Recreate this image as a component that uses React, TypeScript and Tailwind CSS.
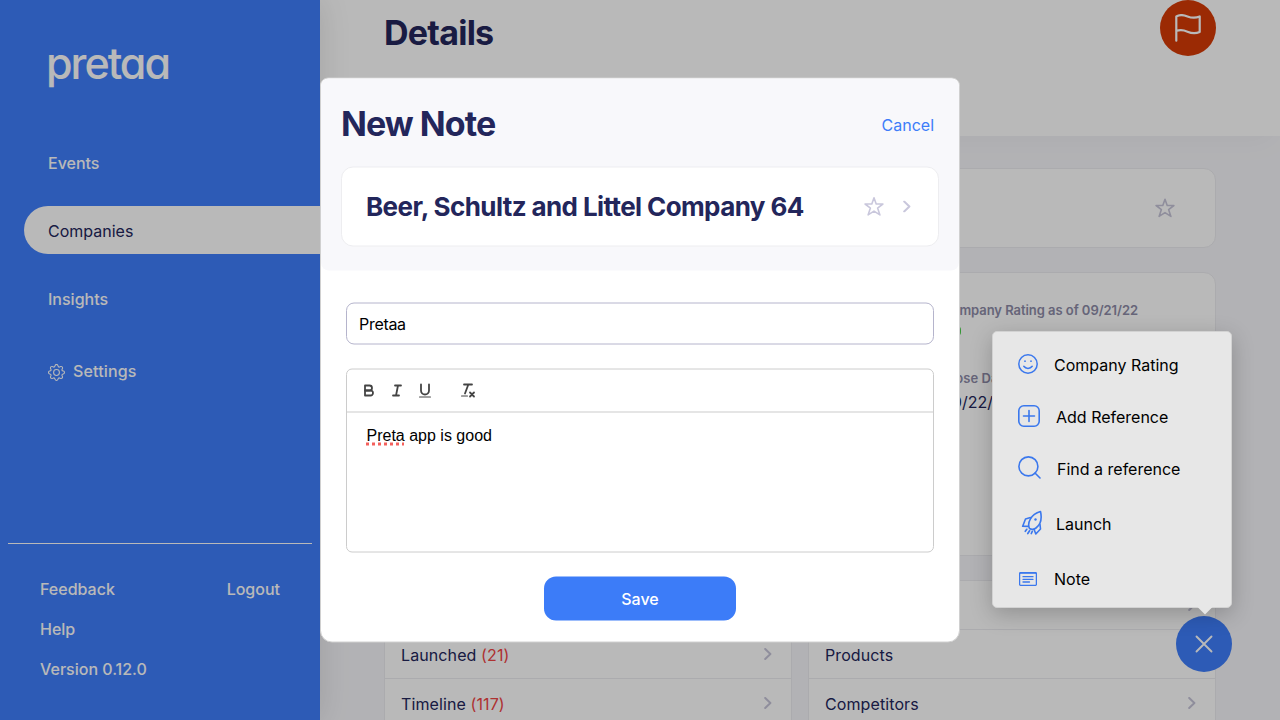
import type { ReactNode } from "react";
import { BsGear } from "react-icons/bs";

function Star({ className }: { className: string }) {
  return (
    <svg viewBox="0 0 20 20" className={className} fill="none" stroke="currentColor" strokeWidth="1.6" strokeLinejoin="round">
      <path d="M10 1.2 12.2 7.4 18.9 7.5 13.6 11.6 15.9 18.4 10 14.6 4.1 18.4 6.4 11.6 1.1 7.5 7.8 7.4Z" />
    </svg>
  );
}

function Chevron({ className }: { className: string }) {
  return (
    <svg viewBox="0 0 8 12" className={className} fill="none" stroke="currentColor" strokeWidth="2" strokeLinecap="round" strokeLinejoin="round">
      <path d="M1.2 1 6.4 6 1.2 11" />
    </svg>
  );
}

function ListRow({ label, count }: { label: string; count?: string }) {
  return (
    <div className="flex h-[49px] shrink-0 items-center justify-between border-b border-[#ececf0] px-4 pt-0.5">
      <span className="text-base tracking-[0.1px] text-[#23265b]">
        {label} {count && <span className="text-[#f04444]">{count}</span>}
      </span>
      <Chevron className="-mt-0.5 mr-[3px] h-3 w-2 text-[#c6c4d8]" />
    </div>
  );
}

function Sidebar() {
  return (
    <aside className="relative flex w-80 shrink-0 flex-col bg-[#3e7efb] text-base font-[450] text-white shadow-[0_0_30px_rgba(0,0,0,0.12)]">
      <div className="h-[139px] pt-[38px] pl-[46px] text-[43px] leading-[50px] font-medium tracking-[-2px] [font-feature-settings:'cv11']">pretaa</div>
      <nav className="flex flex-col">
        <a className="flex h-12 items-center pl-12">Events</a>
        <a className="mt-[19px] ml-6 flex h-12 items-center rounded-l-full bg-white pt-0.5 pl-6 font-normal text-[#23265b]">Companies</a>
        <a className="mt-5 flex h-12 items-center pt-0.5 pl-12">Insights</a>
        <a className="mt-6 flex h-12 items-center gap-2 pt-0.5 pl-12 tracking-[0.15px]">
          <BsGear className="mt-0.5 size-[17px]" />
          Settings
        </a>
      </nav>
      <div className="mx-2 mt-auto grid h-[177px] grid-cols-2 content-start gap-y-4 border-t border-white px-8 pt-[33px] leading-6">
        <span>Feedback</span>
        <span className="text-right">Logout</span>
        <span className="col-span-2">Help</span>
        <span className="col-span-2">Version 0.12.0</span>
      </div>
    </aside>
  );
}

function Content() {
  return (
    <main className="flex min-w-0 flex-1 flex-col bg-[#f6f6fa]">
      <header className="flex h-[136px] shrink-0 items-start justify-between bg-white pr-16 pl-16 shadow-[0_10px_30px_-4px_rgba(0,0,0,0.03)]">
        <h1 className="pt-3 text-[34px] leading-[42px] font-bold tracking-[-0.75px] text-[#23265b]">Details</h1>
        <div className="flex size-14 items-center justify-center rounded-full bg-[#d63a06] text-white">
          <svg viewBox="0 0 28 28" className="size-7" fill="none" stroke="currentColor" strokeWidth="2.2" strokeLinecap="round" strokeLinejoin="round">
            <path d="M2.300 26.700V2.500C6 .2 9.500.8 13.500 2.400c4 1.600 8 1.800 12.200.1v15.500c-4 1.700-7.500 1.700-12.200-.3-3.500-1.500-7.500-2-11.200-.7" />
          </svg>
        </div>
      </header>
      <div className="flex flex-1 flex-col px-16 pt-8">
        <div className="flex h-20 shrink-0 items-center justify-end rounded-xl border border-[#ececf0] bg-white pr-10">
          <Star className="size-5 text-[#c6c4d8]" />
        </div>
        <div className="mt-6 flex h-[284px] shrink-0 flex-col rounded-xl border border-[#ececf0] bg-white pt-[27px] pl-[557px]">
          <div className="text-[13px] leading-5 font-semibold tracking-[-0.05px] text-[#8d8ba7]">Company Rating as of 09/21/22</div>
          <div className="mt-1.5 h-2.5 w-[19px] rounded-sm bg-[#4bd04b]" />
          <div className="mt-8 text-[13px] leading-5 font-semibold tracking-[0.1px] text-[#8d8ba7]">Close Date</div>
          <div className="mt-0.5 text-base leading-6 text-[#23265b]">09/22/22</div>
        </div>
        <div className="mt-6 grid h-[140px] grid-cols-2 gap-4 overflow-hidden">
          <section className="flex flex-col border border-[#ececf0] bg-white">
            <ListRow label="Notes" />
            <ListRow label="Launched" count="(21)" />
            <ListRow label="Timeline" count="(117)" />
          </section>
          <section className="flex flex-col border border-[#ececf0] bg-white">
            <ListRow label="Contacts" />
            <ListRow label="Products" />
            <ListRow label="Competitors" />
          </section>
        </div>
      </div>
    </main>
  );
}

function MenuItem({ icon, label, className }: { icon: ReactNode; label: string; className: string }) {
  return (
    <div className={"flex items-center text-base text-black " + className}>
      <span className="text-[#3b78ed]">{icon}</span>
      <span>{label}</span>
    </div>
  );
}

function ActionMenu() {
  return (
    <div className="absolute top-[330.5px] left-[992px] w-60">
      <div className="h-[277px] rounded-[5px] border border-[#d2d2d2] bg-[#e7e7e7] pt-[7px] pl-[25px] shadow-[0_6px_22px_rgba(0,0,0,0.22)]">
        <MenuItem
          className="h-[52px] gap-4"
          label="Company Rating"
          icon={
            <svg viewBox="0 0 20 20" className="-mt-0.5 size-5" fill="none" stroke="currentColor" strokeWidth="1.5" strokeLinecap="round">
              <circle cx="10" cy="10" r="9.200" />
              <path d="M5.800 12.300c1 1.400 2.400 2.100 4.200 2.100s3.200-.7 4.200-2.100" />
              <path d="M7 7v.2M13 7v.2" strokeWidth="1.700" />
            </svg>
          }
        />
        <MenuItem
          className="h-[52px] gap-4"
          label="Add Reference"
          icon={
            <svg viewBox="0 0 22 22" className="-mt-0.5 size-[22px]" fill="none" stroke="currentColor" strokeWidth="1.6" strokeLinecap="round">
              <rect x=".8" y=".8" width="20.400" height="20.400" rx="5" />
              <path d="M11 5.500v11M5.500 11h11" />
            </svg>
          }
        />
        <MenuItem
          className="h-[52px] gap-4"
          label="Find a reference"
          icon={
            <svg viewBox="0 0 23 23" className="-mt-0.5 size-[23px]" fill="none" stroke="currentColor" strokeWidth="1.6" strokeLinecap="round">
              <circle cx="10.400" cy="10.400" r="9.500" />
              <path d="m17 17 5 5" />
            </svg>
          }
        />
        <MenuItem
          className="h-[58px] gap-[13px] pl-[3px]"
          label="Launch"
          icon={
            <svg viewBox="0 0 22 25" className="-mt-0.5 h-[25px] w-[22px]" fill="none" stroke="currentColor" strokeWidth="1.6" strokeLinecap="round" strokeLinejoin="round">
              <path d="M8.500 18.500C6 13 9.500 4.500 19.500 1.500c1.600 7 0 13-4.500 16.500-2 1.500-4.500 1.800-6.500.5Z" />
              <path d="M9.500 7.500 4.500 9 1.700 16.300 7.200 16.400M19 14.500l.5 4.500-4.700 5-1.800-4.800" />
              <path d="M5.800 19.300 4.300 21.300M8.600 20.800l-1.800 2.700M11.300 21.300l-1 2.200" strokeWidth="1.700" />
              <circle cx="14.500" cy="9.500" r="1.200" fill="currentColor" stroke="none" />
            </svg>
          }
        />
        <MenuItem
          className="h-[52px] gap-[17px] pl-px"
          label="Note"
          icon={
            <svg viewBox="0 0 18 14" className="h-3.5 w-[18px]" fill="none" stroke="currentColor" strokeWidth="1.300" strokeLinecap="round">
              <rect x=".6" y=".6" width="16.800" height="12.800" rx="1.200" />
              <path d="M1 1h16M4 4.700h10M4 7.300h10M4 10h6.500" />
            </svg>
          }
        />
      </div>
      <div className="absolute top-[276px] left-[205px] h-2 w-4 bg-[#e7e7e7] [clip-path:polygon(0_0,100%_0,50%_100%)]" />
    </div>
  );
}

function ToolButton({ children, className = "" }: { children: ReactNode; className?: string }) {
  return (
    <button className={"h-6 w-7 px-[5px] py-[3px] " + className}>
      <svg viewBox="0 0 18 18" className="size-[18px]" fill="none" stroke="#444" strokeWidth="1.8" strokeLinecap="round" strokeLinejoin="round">
        {children}
      </svg>
    </button>
  );
}

function Editor() {
  return (
    <div className="mt-6 flex h-[184px] flex-col rounded-md border border-[#ccc]">
      <div className="flex h-[43px] shrink-0 border-b border-[#ccc] px-2 pt-[9px]">
        <ToolButton>
          <path d="M5,4H9.500A2.500,2.500,0,0,1,12,6.500v0A2.500,2.500,0,0,1,9.500,9H5V4Z" />
          <path d="M5,9h5.500A2.500,2.500,0,0,1,13,11.500v0A2.500,2.500,0,0,1,10.500,14H5V9Z" />
        </ToolButton>
        <ToolButton>
          <path d="M7 4h6M5 14h6M8 14 10 4" />
        </ToolButton>
        <ToolButton>
          <path d="M5,3V9a4.012,4.012,0,0,0,4,4H9a4.012,4.012,0,0,0,4-4V3" />
          <rect x="3" y="15" width="12" height="1" rx=".5" fill="#444" stroke="none" />
        </ToolButton>
        <ToolButton className="ml-[15px]">
          <path d="M5 3h8M6 12 9.350 3M11 11l4 4M15 11l-4 4" />
          <rect x="2" y="14" width="7" height="1" rx=".5" fill="#444" stroke="none" />
        </ToolButton>
      </div>
      <p className="px-[19.5px] pt-[11px] font-['Liberation_Sans',sans-serif] text-base leading-6 text-black">
        <span className="underline decoration-[#f4605c] decoration-dotted decoration-[2.5px] underline-offset-2 [text-decoration-skip-ink:none]">Preta</span> app is good
      </p>
    </div>
  );
}

function NoteModal() {
  return (
    <div className="absolute top-1/2 left-1/2 flex h-[565px] w-[640px] -translate-x-1/2 -translate-y-1/2 flex-col rounded-t-lg rounded-b-xl border border-[#d0d0d0] bg-white">
      <div className="flex h-48 shrink-0 flex-col rounded-lg bg-[#f8f8fb] px-5 pt-6">
        <div className="flex h-[44px] items-center justify-between pr-[5px]">
          <h2 className="-mt-0.5 text-[34px] leading-[44px] font-bold tracking-[-0.95px] text-[#23265b]">New Note</h2>
          <a className="text-base text-[#3d7df9]">Cancel</a>
        </div>
        <div className="mt-5 flex h-20 items-center rounded-xl border border-[#ededf0] bg-white pr-[27px] pl-6">
          <h3 className="mr-auto text-[26px] leading-8 font-bold whitespace-nowrap tracking-[-0.6px] text-[#23265b]">Beer, Schultz and Littel Company 64</h3>
          <Star className="mr-[19px] size-5 text-[#c9c7dc]" />
          <Chevron className="h-3 w-2 text-[#c9c7dc]" />
        </div>
      </div>
      <div className="flex flex-col px-[25px] pt-8">
        <div className="flex h-[42px] items-center rounded-lg border border-[#b5b4cc] px-3 text-base tracking-[-0.3px] text-black">Pretaa</div>
        <Editor />
        <button className="mt-6 h-11 w-48 self-center rounded-xl bg-[#3c7cf8] text-base font-medium text-white">Save</button>
      </div>
    </div>
  );
}

export default function App() {
  return (
    <div className="relative flex h-[720px] w-[1280px] overflow-hidden font-['Inter','Liberation_Sans',sans-serif]">
      <Sidebar />
      <Content />
      <button className="absolute top-[616px] left-[1176px] flex size-14 items-center justify-center rounded-full bg-[#3e7efb] text-white">
        <svg viewBox="0 0 18 18" className="size-[18px]" fill="none" stroke="currentColor" strokeWidth="1.900" strokeLinecap="round">
          <path d="m1.500 1.500 15 15M16.500 1.500l-15 15" />
        </svg>
      </button>
      <div className="absolute inset-0 bg-black/[0.275]" />
      <ActionMenu />
      <NoteModal />
    </div>
  );
}
